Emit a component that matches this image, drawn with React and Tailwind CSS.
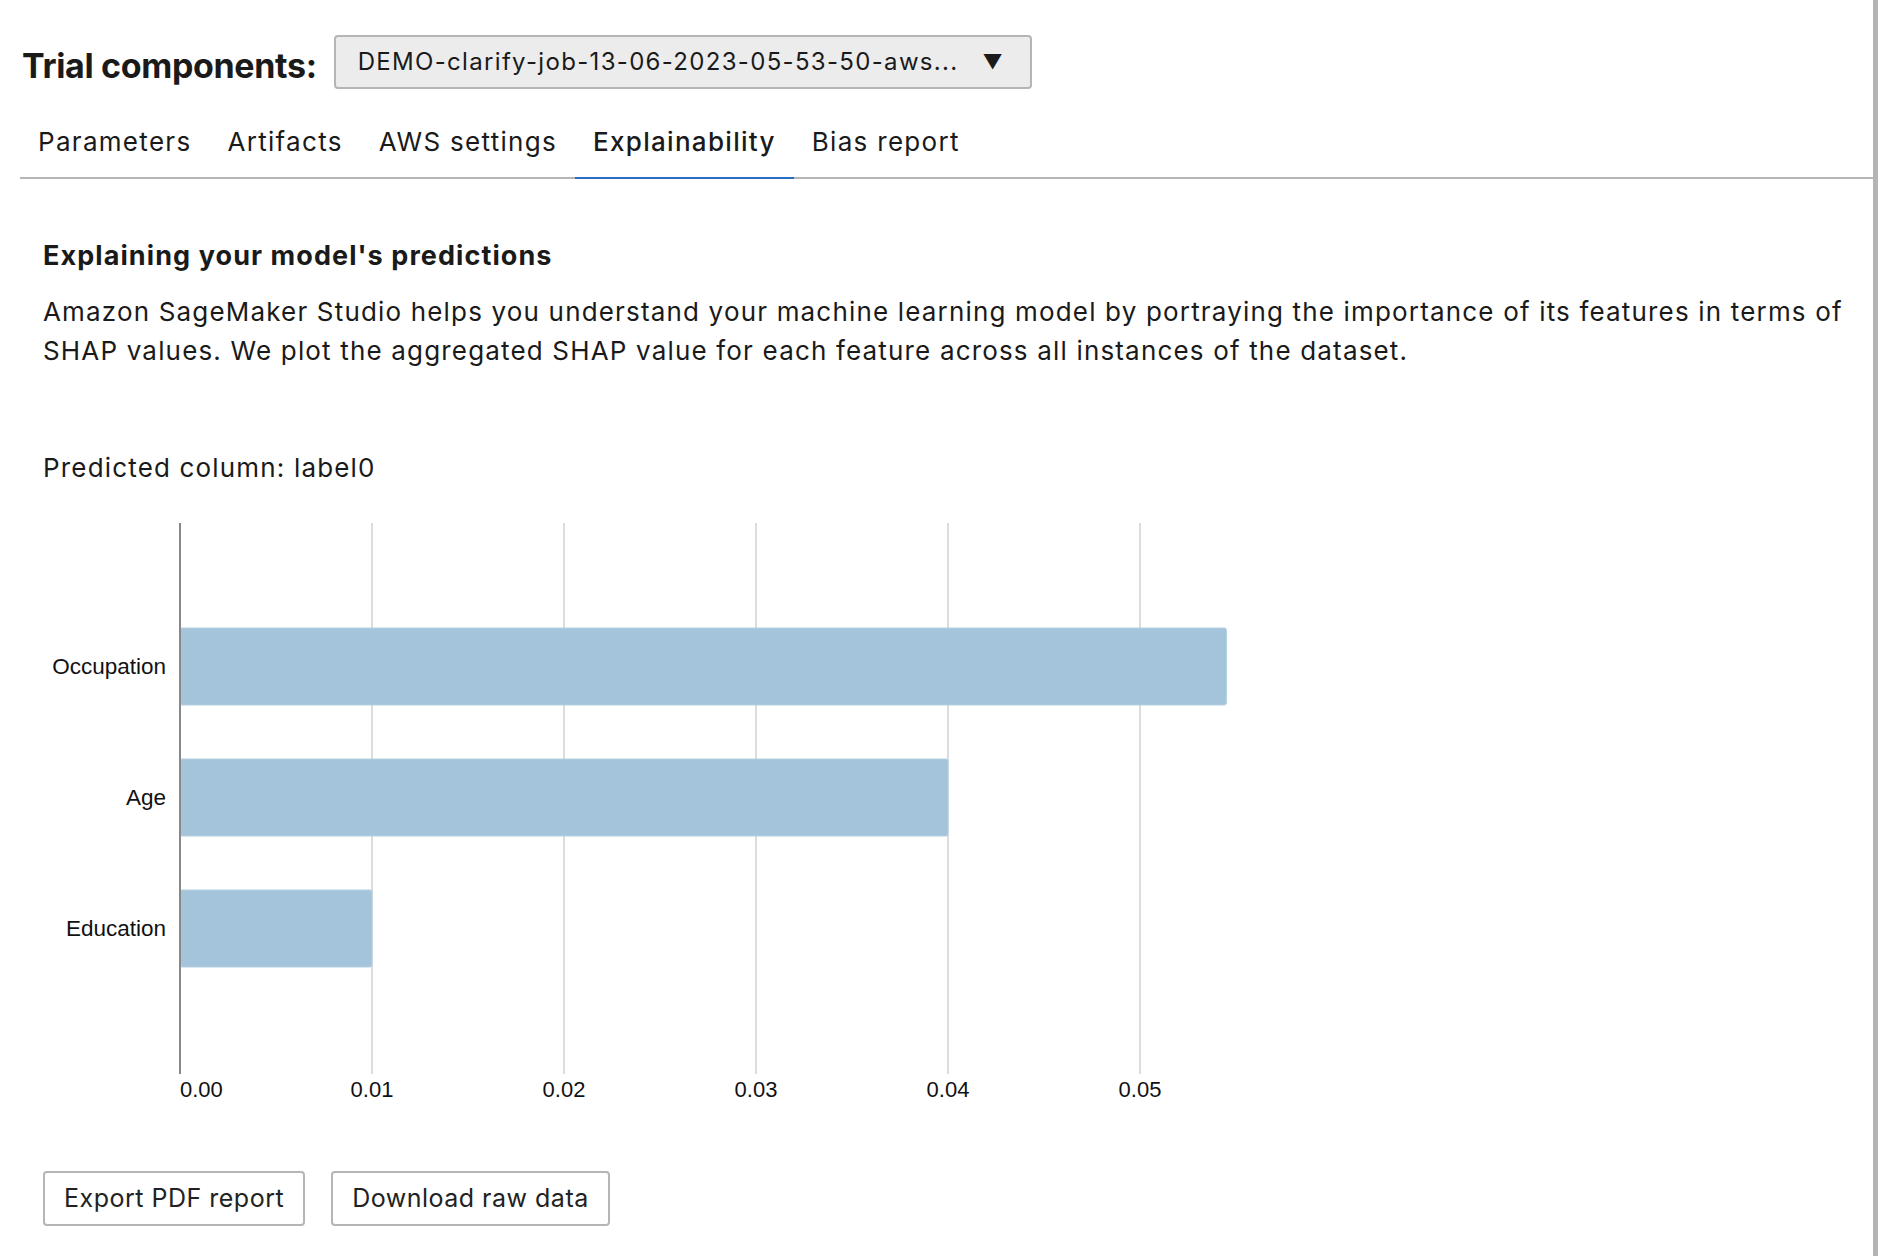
import { useState } from 'react'

const tabs = ['Parameters', 'Artifacts', 'AWS settings', 'Explainability', 'Bias report']

const features = [
  { name: 'Occupation', value: 0.0545 },
  { name: 'Age', value: 0.04 },
  { name: 'Education', value: 0.01 },
]

const ticks = [0, 0.01, 0.02, 0.03, 0.04, 0.05]

function ShapChart() {
  const x0 = 137
  const unit = 19200
  const barTop = [105, 236, 367]
  return (
    <svg width="1300" height="590" className="block">
      {ticks.slice(1).map((t) => (
        <line key={t} x1={x0 + t * unit} x2={x0 + t * unit} y1="0" y2="551" stroke="#dcdcdc" strokeWidth="2" />
      ))}
      {features.map((f, i) => (
        <g key={f.name}>
          <rect x={x0} y={barTop[i]} width={f.value * unit} height="77" rx="2" fill="#a3c4da" stroke="#b4d0e2" strokeWidth="1" />
          <text x={x0 - 14} y={barTop[i] + 46} textAnchor="end" fontSize="22.5" fill="#111" fontFamily="'Liberation Sans', Arial, sans-serif">
            {f.name}
          </text>
        </g>
      ))}
      <line x1={x0} x2={x0} y1="0" y2="551" stroke="#888" strokeWidth="2" />
      {ticks.map((t, i) => (
        <text
          key={t}
          x={i === 0 ? x0 : x0 + t * unit}
          y="574"
          textAnchor={i === 0 ? 'start' : 'middle'}
          fontSize="22"
          fill="#111"
          fontFamily="'Liberation Sans', Arial, sans-serif"
        >
          {t.toFixed(2)}
        </text>
      ))}
    </svg>
  )
}

export default function App() {
  const [active, setActive] = useState('Explainability')

  return (
    <div className="min-h-screen bg-white flex text-[#1a1a1a]" style={{ fontFamily: "Inter, 'Liberation Sans', sans-serif" }}>
      <div className="flex-1 pl-[20px]">
        <div className="flex items-center pt-[35px]">
          <div className="ml-[2px] mt-[8px] text-[34px] leading-[44px] font-bold tracking-[-0.01em]">Trial components:</div>
          <button className="ml-[17px] w-[698px] h-[54px] bg-[#ececec] border-2 border-[#b5b5b5] rounded-[4px] flex items-center justify-between pl-[22px] pr-[27px] text-[24px] tracking-[0.055em] text-[#1a1a1a]">
            <span>DEMO-clarify-job-13-06-2023-05-53-50-aws...</span>
            <span className="text-[20px] tracking-normal">▼</span>
          </button>
        </div>

        <div className="mt-[16px] flex border-b-2 border-[#b5b5b5]">
          {tabs.map((t) => (
            <button
              key={t}
              onClick={() => setActive(t)}
              className={
                t === active
                  ? 'h-[74px] px-[18px] flex items-center text-[26px] tracking-[0.05em] font-medium border-b-2 border-[#2a6dc9] -mb-[2px]'
                  : 'h-[74px] px-[18px] flex items-center text-[26px] tracking-[0.05em] border-b-2 border-transparent -mb-[2px]'
              }
            >
              {t}
            </button>
          ))}
        </div>

        <div className="pl-[23px] pr-[20px]">
          <h2 className="mt-[61px] text-[27px] leading-[32px] font-bold tracking-[0.04em]">Explaining your model's predictions</h2>
          <p className="mt-[20px] text-[26px] leading-[39px] tracking-[0.045em]">
            Amazon SageMaker Studio helps you understand your machine learning model by portraying the importance of its features in terms of SHAP values. We plot the aggregated SHAP value for each feature across all instances of the dataset.
          </p>
          <div className="mt-[82px] text-[26px] leading-[32px] tracking-[0.045em]">Predicted column: label0</div>

          <div className="mt-[39px]">
            <ShapChart />
          </div>

          <div className="mt-[58px] flex gap-[26px] pb-[30px]">
            <button className="h-[55px] px-[19px] border-2 border-[#b5b5b5] rounded-[4px] bg-white text-[25px] tracking-[0.02em] text-[#222]">Export PDF report</button>
            <button className="h-[55px] px-[19px] border-2 border-[#b5b5b5] rounded-[4px] bg-white text-[25px] tracking-[0.02em] text-[#222]">Download raw data</button>
          </div>
        </div>
      </div>
      <div className="w-[5px] bg-[#b4b4b4]" />
    </div>
  )
}
